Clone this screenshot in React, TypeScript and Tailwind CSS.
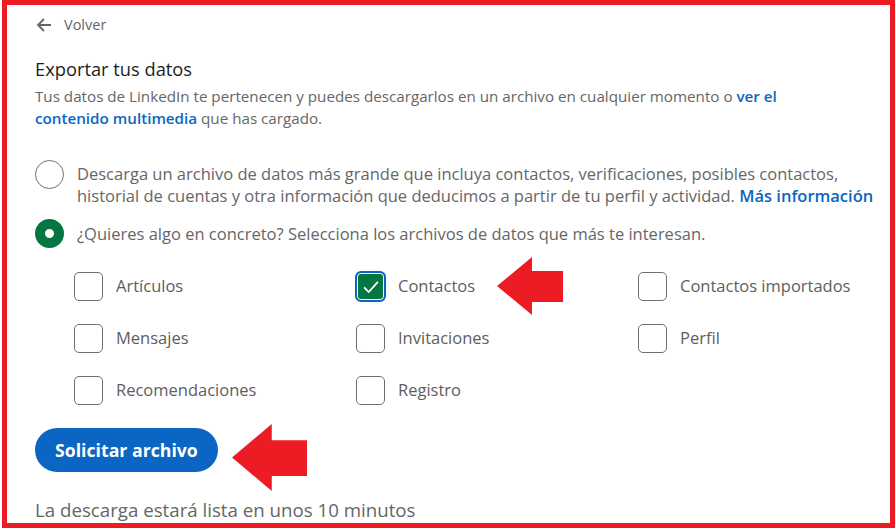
import React from 'react';

const font = { fontFamily: '"Open Sans", "Noto Sans", Arial, sans-serif' };

const options = [
  ['Artículos', 'Contactos', 'Contactos importados'],
  ['Mensajes', 'Invitaciones', 'Perfil'],
  ['Recomendaciones', 'Registro'],
];

function RedArrow({ className }: { className: string }) {
  return (
    <svg viewBox="0 0 66 58" className={className} preserveAspectRatio="none">
      <polygon points="0,29 35,0 35,14 66,14 66,45 35,45 35,58" fill="#ed1c24" />
    </svg>
  );
}

function Checkbox({ label, checked }: { label: string; checked?: boolean }) {
  return (
    <div className="flex h-[29px] items-center gap-[13px]">
      {checked ? (
        <span className="-ml-[1px] -mr-[1px] flex h-[31px] w-[31px] items-center justify-center rounded-[6px] border-2 border-[#0a66c2] bg-[#057642] shadow-[inset_0_0_0_1px_#fff]">
          <svg viewBox="0 0 24 24" className="h-[22px] w-[22px]" fill="none" stroke="#fff" strokeWidth="2">
            <path d="M4.5 12.5l5 5 10-11" />
          </svg>
        </span>
      ) : (
        <span className="h-[29px] w-[29px] rounded-[5px] border-[1.5px] border-[#6f6f6f]" />
      )}
      <span className="whitespace-nowrap text-[16.5px] text-[#5e5e5e]">{label}</span>
    </div>
  );
}

export default function App() {
  return (
    <div className="h-[530px] w-[895px] overflow-hidden bg-white" style={font}>
      <div className="relative ml-[2px] h-[528px] w-[893px] border-[5px] border-[#ed1c24] pl-[28px]">
        <div className="mt-[8px] flex h-6 items-center gap-[12px] pl-[1px] text-[#666]">
          <svg viewBox="0 0 16 16" className="h-[16px] w-[16px]" fill="none" stroke="#666" strokeWidth="1.8">
            <path d="M15 8H2M8 2L2 8l6 6" />
          </svg>
          <span className="text-[14.5px]">Volver</span>
        </div>

        <h1 className="mt-[20px] text-[18.3px] leading-6 text-[#1d1d1d]">Exportar tus datos</h1>
        <p className="mt-[4px] whitespace-nowrap text-[15.2px] leading-[22px] text-[#666]">
          Tus datos de LinkedIn te pertenecen y puedes descargarlos en un archivo en cualquier momento o{' '}
          <span className="font-semibold text-[#0a66c2]">ver el</span>
          <br />
          <span className="font-semibold text-[#0a66c2]">contenido multimedia</span> que has cargado.
        </p>

        <div className="mt-[31px] flex items-start gap-[13px]">
          <span className="h-[29px] w-[29px] shrink-0 rounded-full border-[1.5px] border-[#6f6f6f]" />
          <p className="mt-[3px] whitespace-nowrap text-[16.5px] leading-[22px] text-[#666]">
            Descarga un archivo de datos más grande que incluya contactos, verificaciones, posibles contactos,
            <br />
            historial de cuentas y otra información que deducimos a partir de tu perfil y actividad.{' '}
            <span className="font-semibold text-[#0a66c2]">Más información</span>
          </p>
        </div>

        <div className="mt-[12px] flex items-center gap-[13px]">
          <span className="h-[29px] w-[29px] shrink-0 rounded-full border-[10px] border-[#057642]" />
          <p className="whitespace-nowrap text-[16.5px] leading-[22px] text-[#666]">
            ¿Quieres algo en concreto? Selecciona los archivos de datos que más te interesan.
          </p>
        </div>

        <div className="ml-[39px] mt-[24px] grid grid-cols-[282px_282px_282px] gap-y-[23px]">
          {options.flat().map((label) => (
            <Checkbox key={label} label={label} checked={label === 'Contactos'} />
          ))}
        </div>

        <button className="mt-[23px] h-[44px] rounded-full bg-[#0a66c2] px-[20px] text-[17.7px] font-bold text-white">
          Solicitar archivo
        </button>

        <p className="mt-[27px] text-[18.7px] leading-[22px] text-[#666]">La descarga estará lista en unos 10 minutos</p>

        <RedArrow className="absolute left-[490px] top-[252px] h-[58px] w-[66px]" />
        <RedArrow className="absolute left-[225px] top-[419px] h-[67px] w-[75px]" />
      </div>
    </div>
  );
}
